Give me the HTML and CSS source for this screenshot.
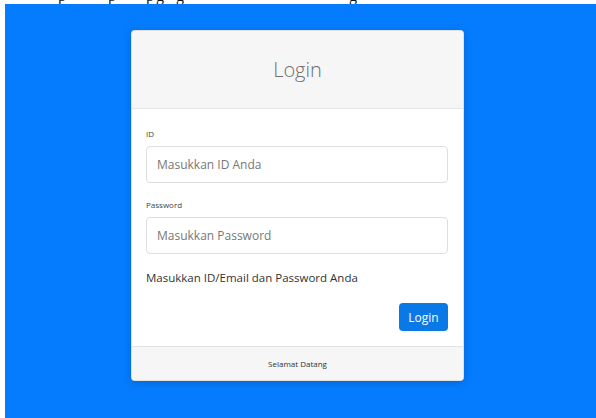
FILE: index.html
```html
<!DOCTYPE html>
<html lang="id">
<head>
<meta charset="utf-8">
<title>Login</title>
<link rel="stylesheet" href="styles.css">
</head>
<body>
  <div class="notice"><div class="notice-line"><span class="n1">p</span><span class="n2">p</span><span class="n3">p</span><span class="n4">g</span><span class="n5">g</span><span class="n6">g</span></div></div>
  <main class="stage">
    <section class="card">
      <header class="card-header">Login</header>
      <form class="card-body">
        <label class="field-label" for="uid">ID</label>
        <input class="field" id="uid" type="text" placeholder="Masukkan ID Anda">
        <label class="field-label gap" for="pwd">Password</label>
        <input class="field" id="pwd" type="password" placeholder="Masukkan Password">
        <p class="hint">Masukkan ID/Email dan Password Anda</p>
        <div class="actions"><button class="btn" type="button">Login</button></div>
      </form>
      <footer class="card-footer">Selamat Datang</footer>
    </section>
  </main>
</body>
</html>
```
FILE: styles.css
```css
html, body {
  margin: 0;
  padding: 0;
  height: 100%;
  background: #fff;
}

body {
  display: flex;
  flex-direction: column;
  padding-left: 5px;
  box-sizing: border-box;
  font-family: "Open Sans", "Noto Sans", sans-serif;
}

/* clipped line of text above the page area */
.notice {
  height: 4px;
  overflow: hidden;
  flex: none;
}
.notice-line {
  margin-top: -12px;
  font-family: "Liberation Serif", serif;
  font-size: 16px;
  line-height: 16px;
  color: #111;
  white-space: nowrap;
}
.notice-line span { display: inline-block; }
.n1 { margin-left: 53px; }
.n2 { margin-left: 42px; }
.n3 { margin-left: 30px; }
.n4 { margin-left: 2px; }
.n5 { margin-left: 12px; }
.n6 { margin-left: 165px; }

.stage {
  flex: 1;
  background: #057cfe;
  padding: 26px 0 0 126px;
}

.card {
  width: 333px;
  box-sizing: border-box;
  background: #fff;
  border: 1px solid rgba(0, 0, 0, 0.12);
  border-radius: 4px;
  box-shadow: 0 2px 8px rgba(0, 0, 0, 0.18);
  overflow: hidden;
}

.card-header {
  height: 77px;
  background: #f6f6f6;
  border-bottom: 1px solid #e6e6e6;
  display: flex;
  align-items: center;
  justify-content: center;
  font-size: 20px;
  font-weight: 300;
  color: #6f6f6f;
}

.card-body {
  margin: 0;
  padding: 19px 15px 15px 14px;
  display: flex;
  flex-direction: column;
}

.field-label {
  font-size: 8px;
  line-height: 12px;
  color: #444;
  margin-bottom: 6px;
}
.field-label.gap { margin-top: 16px; }

.field {
  height: 37px;
  box-sizing: border-box;
  border: 1px solid #dedede;
  border-radius: 4px;
  padding: 0 10px;
  font-family: inherit;
  font-size: 12px;
  color: #333;
  outline: none;
}
.field::placeholder { color: #777; }

.hint {
  margin: 15px 0 0;
  font-size: 11.5px;
  line-height: 17px;
  color: #333;
}

.actions {
  display: flex;
  justify-content: flex-end;
  margin-top: 17px;
}

.btn {
  width: 49px;
  height: 28px;
  border: none;
  border-radius: 4px;
  background: #0b78e8;
  color: #fff;
  font-family: inherit;
  font-size: 12px;
  padding: 0;
}

.card-footer {
  height: 33px;
  background: #f6f6f6;
  border-top: 1px solid #e3e3e3;
  display: flex;
  align-items: center;
  justify-content: center;
  font-size: 8px;
  color: #333;
}
```
